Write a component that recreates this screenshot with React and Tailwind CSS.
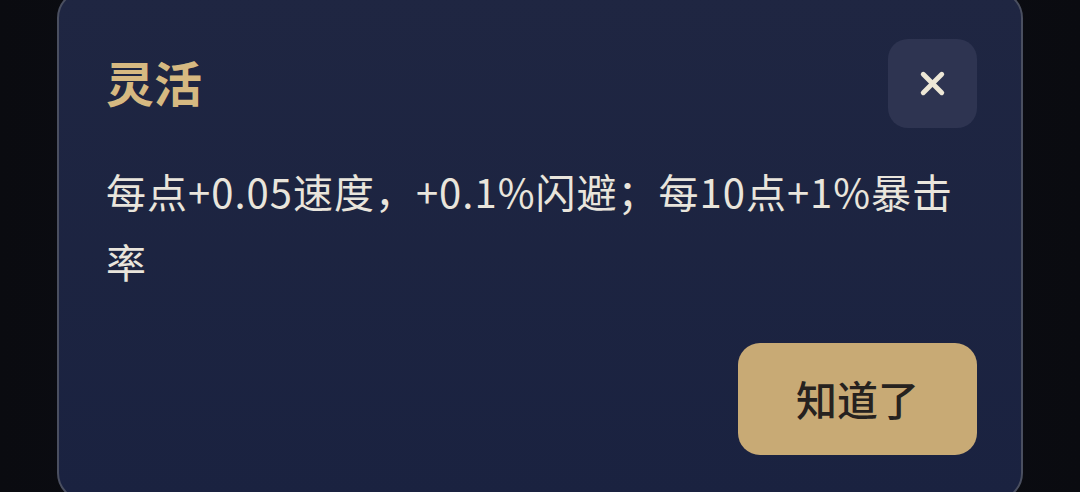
import { X } from 'lucide-react';

const FONT = '"Noto Sans CJK SC", "Noto Sans", sans-serif';

function AttributeDialog({ title, description, onClose }) {
  return (
    <div className="-mt-[10px] w-[966px] shrink-0 rounded-[28px] border-2 border-[#4a4f60] bg-gradient-to-b from-[#1f2642] to-[#1a2240] pt-[47px] pb-[44px] pl-[47px] pr-[44px]">
      {/* Header */}
      <div className="flex items-center justify-between">
        <h2 className="pb-[6px] text-[48px] font-bold leading-none text-[#d6b981]">{title}</h2>
        <button
          onClick={onClose}
          className="flex h-[89px] w-[89px] items-center justify-center rounded-[20px] bg-[#2e3451]"
        >
          <X size={37} strokeWidth={3.2} className="text-[#ede7d6]" />
        </button>
      </div>

      {/* Description */}
      <p className="mt-[28px] text-[40px] leading-[70px] tracking-[1px] text-[#e9e5dc]">
        {description}
      </p>

      {/* Footer */}
      <div className="mt-[47px] flex justify-end">
        <button className="flex h-[112px] w-[239px] items-center justify-center rounded-[22px] bg-[#c8aa75] text-[41px] font-medium text-[#26221f]">
          知道了
        </button>
      </div>
    </div>
  );
}

export default function App() {
  return (
    <div
      className="flex h-[492px] w-full items-start justify-center overflow-hidden bg-gradient-to-r from-[#0a0b10] via-[#0d0f18] to-[#0a0b10]"
      style={{ fontFamily: FONT }}
    >
      <AttributeDialog
        title="灵活"
        description="每点+0.05速度，+0.1%闪避；每10点+1%暴击率"
        onClose={() => {}}
      />
    </div>
  );
}
